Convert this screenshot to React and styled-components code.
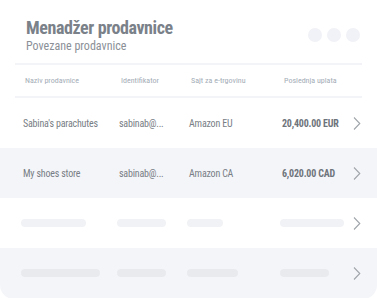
import styled, { createGlobalStyle } from 'styled-components';

const GlobalStyle = createGlobalStyle`
  html, body {
    margin: 0;
    padding: 0;
    background: #ffffff;
  }
  body {
    font-family: "Roboto Condensed", "Liberation Sans Narrow", Roboto, sans-serif;
    font-stretch: condensed;
  }
`;

const Card = styled.div`
  width: 377px;
  height: 299px;
  background: #ffffff;
  border-radius: 14px;
  overflow: hidden;
  display: flex;
  flex-direction: column;
`;

const Head = styled.div`
  display: flex;
  justify-content: space-between;
  align-items: flex-start;
  padding: 17px 17px 10px 26px;
`;

const Titles = styled.div`
  display: flex;
  flex-direction: column;
`;

const Title = styled.h1`
  margin: 0;
  font-size: 18px;
  line-height: 22px;
  font-weight: 700;
  letter-spacing: -0.4px;
  color: #7a8189;
`;

const Subtitle = styled.div`
  font-size: 12px;
  line-height: 14px;
  color: #8b9097;
`;

const Dots = styled.div`
  display: flex;
  gap: 5px;
  margin-top: 11px;
`;

const Dot = styled.span`
  width: 14px;
  height: 14px;
  border-radius: 50%;
  background: #f1f2f7;
`;

const Divider = styled.div`
  height: 2px;
  margin: 0 15px;
  background: #f3f4f8;
`;

const Row = styled.div`
  display: grid;
  grid-template-columns: 96px 70px 93px 1fr 24px;
  align-items: center;
  height: ${(p) => p.h || 50}px;
  padding-left: ${(p) => p.pl || 23}px;
  background: ${(p) => (p.shaded ? '#f4f5f9' : '#ffffff')};
`;

const HeadCell = styled.div`
  font-size: 8px;
  color: #a3acb6;
`;

const Cell = styled.div`
  font-size: 10px;
  letter-spacing: -0.2px;
  color: #787e85;
  white-space: nowrap;
`;

const Amount = styled(Cell)`
  font-weight: 700;
  color: #6e747b;
`;

const Bar = styled.div`
  width: ${(p) => p.w}px;
  height: 8px;
  border-radius: 4px;
  background: ${(p) => (p.shaded ? '#e8eaee' : '#f1f2f5')};
`;

const Chevron = () => (
  <svg width="8" height="13" viewBox="0 0 8 13" fill="none">
    <path d="M1 0.5 L6.8 6.5 L1 12.5" stroke="#a0a5ab" strokeWidth="1.1" />
  </svg>
);

const stores = [
  { name: "Sabina's parachutes", id: 'sabinab@...', site: 'Amazon EU', amount: '20,400.00 EUR' },
  { name: 'My shoes store', id: 'sabinab@...', site: 'Amazon CA', amount: '6,020.00 CAD' },
];

const skeletons = [
  [65, 49, 36, 64],
  [79, 49, 51, 49],
];

export default function App() {
  return (
    <>
      <GlobalStyle />
      <Card>
        <Head>
          <Titles>
            <Title>Menadžer prodavnice</Title>
            <Subtitle>Povezane prodavnice</Subtitle>
          </Titles>
          <Dots>
            <Dot />
            <Dot />
            <Dot />
          </Dots>
        </Head>
        <Divider />
        <Row h={31} pl={25}>
          <HeadCell>Naziv prodavnice</HeadCell>
          <HeadCell>Identifikator</HeadCell>
          <HeadCell>Sajt za e-trgovinu</HeadCell>
          <HeadCell>Poslednja uplata</HeadCell>
        </Row>
        <Divider />
        {stores.map((s, i) => (
          <Row key={s.name} shaded={i % 2 === 1}>
            <Cell>{s.name}</Cell>
            <Cell>{s.id}</Cell>
            <Cell>{s.site}</Cell>
            <Amount>{s.amount}</Amount>
            <Chevron />
          </Row>
        ))}
        {skeletons.map((w, i) => (
          <Row key={i} shaded={i % 2 === 1} pl={21}>
            <Bar w={w[0]} shaded={i % 2 === 1} />
            <Bar w={w[1]} shaded={i % 2 === 1} />
            <Bar w={w[2]} shaded={i % 2 === 1} />
            <Bar w={w[3]} shaded={i % 2 === 1} />
            <Chevron />
          </Row>
        ))}
      </Card>
    </>
  );
}
